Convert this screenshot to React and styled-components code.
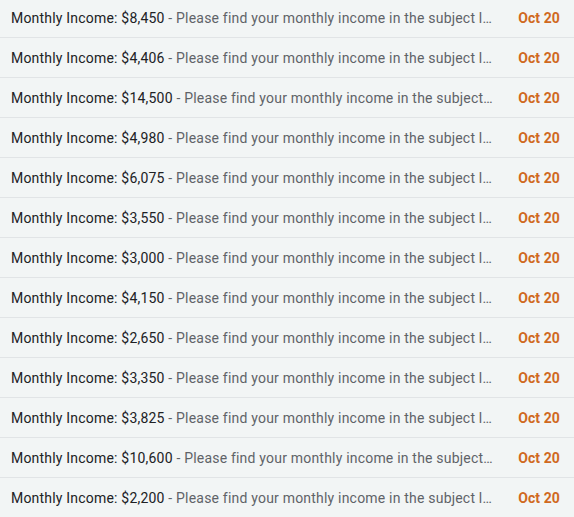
import React from "react";
import styled, { createGlobalStyle } from "styled-components";

const Global = createGlobalStyle`
  html, body { margin: 0; padding: 0; background: #f2f5f5; }
  body { font-family: Roboto, "Noto Sans", Arial, sans-serif; overflow: hidden; }
`;

const List = styled.div`
  display: flex;
  flex-direction: column;
  margin-top: -2px;
`;

const Row = styled.div`
  display: flex;
  align-items: center;
  height: 39px;
  border-bottom: 1px solid #e1e4e6;
  background: #f2f5f5;
  padding: 0 14px 0 11px;
  font-size: 14px;
`;

const Summary = styled.div`
  flex: 1;
  min-width: 0;
  white-space: nowrap;
  overflow: hidden;
  text-overflow: ellipsis;
  color: #5f6368;
  letter-spacing: 0.2px;
`;

const Subject = styled.span`
  color: #202124;
`;

const DateLabel = styled.div`
  flex: none;
  margin-left: 25px;
  color: #d0691f;
  font-weight: 700;
  letter-spacing: 0.1px;
`;

const amounts = [
  "$8,450", "$4,406", "$14,500", "$4,980", "$6,075", "$3,550", "$3,000",
  "$4,150", "$2,650", "$3,350", "$3,825", "$10,600", "$2,200",
];

export default function App() {
  return (
    <>
      <Global />
      <List>
        {amounts.map((a, i) => (
          <Row key={i}>
            <Summary>
              <Subject>Monthly Income: {a}</Subject> - Please find your monthly income in the subject line
            </Summary>
            <DateLabel>Oct 20</DateLabel>
          </Row>
        ))}
      </List>
    </>
  );
}
